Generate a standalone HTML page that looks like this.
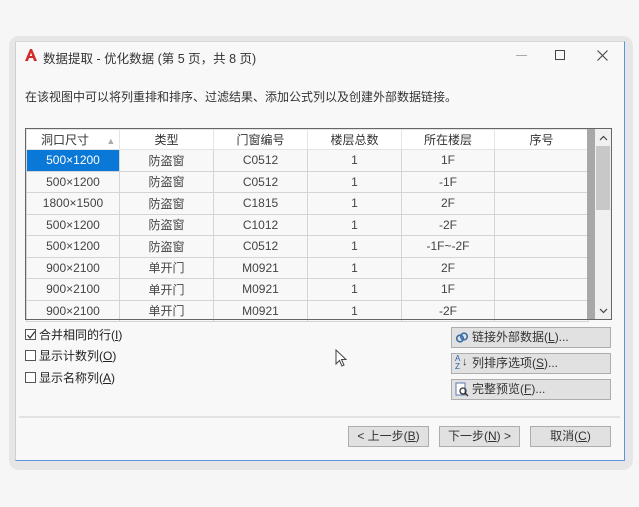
<!DOCTYPE html>
<html><head><meta charset="utf-8"><style>
*{margin:0;padding:0;box-sizing:border-box}
body{width:639px;height:507px;background:#f6f6f6;position:relative;overflow:hidden;font-family:"Liberation Sans","Microsoft YaHei","Noto Sans CJK SC",sans-serif;font-size:12px;color:#222}
.a{position:absolute}
.shadow{left:9px;top:36px;width:624px;height:434px;background:#e6e6e6;border-radius:10px}
.win{left:15px;top:41px;width:610px;height:420px;background:#f8f8f8;border:1px solid #5a94dc;border-top-color:#d8d8d8;border-left-color:#d0d0d0}
table{border-collapse:collapse;position:absolute;left:26px;top:129px;table-layout:fixed}
td,th{height:21.5px;border:1px solid #d4d4d4;text-align:center;font-weight:normal;font-size:12px;color:#444;padding:0;white-space:nowrap}
th{background:#fff;border-color:#e4e4e4;height:20px;color:#333}
td{background:#f8f8f8}
td.sel{background:#0a78d7;color:#fff}
.cb{width:11px;height:11px;border:1px solid #555;background:#fff}
.btn{background:#e1e1e1;border:1px solid #adadad;height:21px;font-size:12px;line-height:19px;color:#333}
</style></head><body>
<div class="a shadow"></div>
<div class="a win"></div>
<svg class="a" style="left:24px;top:48px" width="14" height="14" viewBox="0 0 14 14"><path d="M1 13 L6 1 H8 L13 13 H10 L9 10 H5 L4 13 Z M5.8 8 H8.2 L7 4.5 Z" fill="#d42a2a"/></svg>
<div class="a" style="left:43px;top:48px;font-size:12.5px;color:#333">数据提取 - 优化数据 (第 5 页，共 8 页)</div>
<div class="a" style="left:516px;top:55px;width:11px;height:1px;background:#aaa"></div>
<div class="a" style="left:555px;top:50px;width:10px;height:10px;border:1px solid #444"></div>
<svg class="a" style="left:597px;top:50px" width="11" height="11"><path d="M0.5 0.5 L10.5 10.5 M10.5 0.5 L0.5 10.5" stroke="#444" stroke-width="1.1"/></svg>
<div class="a" style="left:25px;top:88px;color:#333">在该视图中可以将列重排和排序、过滤结果、添加公式列以及创建外部数据链接。</div>
<div class="a" style="left:25px;top:128px;width:587px;height:192px;border:1px solid #666;background:#f8f8f8"></div>
<table>
<colgroup><col style="width:93px"><col style="width:94px"><col style="width:94px"><col style="width:94px"><col style="width:93px"><col style="width:94px"></colgroup>
<tr><th style="text-align:left;padding-left:14px">洞口尺寸 <span style="color:#aaa;font-size:9px;margin-left:14px">▲</span></th><th>类型</th><th>门窗编号</th><th>楼层总数</th><th>所在楼层</th><th>序号</th></tr>
<tr><td class="sel">500×1200</td><td>防盗窗</td><td>C0512</td><td>1</td><td>1F</td><td></td></tr>
<tr><td>500×1200</td><td>防盗窗</td><td>C0512</td><td>1</td><td>-1F</td><td></td></tr>
<tr><td>1800×1500</td><td>防盗窗</td><td>C1815</td><td>1</td><td>2F</td><td></td></tr>
<tr><td>500×1200</td><td>防盗窗</td><td>C1012</td><td>1</td><td>-2F</td><td></td></tr>
<tr><td>500×1200</td><td>防盗窗</td><td>C0512</td><td>1</td><td>-1F~-2F</td><td></td></tr>
<tr><td>900×2100</td><td>单开门</td><td>M0921</td><td>1</td><td>2F</td><td></td></tr>
<tr><td>900×2100</td><td>单开门</td><td>M0921</td><td>1</td><td>1F</td><td></td></tr>
<tr><td>900×2100</td><td>单开门</td><td>M0921</td><td>1</td><td>-2F</td><td></td></tr>
</table>
<div class="a" style="left:26px;top:319px;width:586px;height:1px;background:#666"></div>
<div class="a" style="left:587px;top:129px;width:8px;height:190px;background:#a8a8a8"></div>
<div class="a" style="left:595px;top:129px;width:16px;height:190px;background:#f0f0f0"></div>
<div class="a" style="left:596px;top:146px;width:14px;height:64px;background:#c8c8c8"></div>
<svg class="a" style="left:599px;top:135px" width="9" height="6"><path d="M1 5 L4.5 1.5 L8 5" stroke="#444" fill="none" stroke-width="1.2"/></svg>
<svg class="a" style="left:599px;top:308px" width="9" height="6"><path d="M1 1 L4.5 4.5 L8 1" stroke="#444" fill="none" stroke-width="1.2"/></svg>
<div class="a cb" style="left:25px;top:329px"></div>
<svg class="a" style="left:26px;top:330px" width="10" height="10"><path d="M1.5 5 L4 8 L9 1.5" stroke="#333" stroke-width="1.2" fill="none"/></svg>
<div class="a" style="left:39px;top:326px">合并相同的行(<u>I</u>)</div>
<div class="a cb" style="left:25px;top:350px"></div>
<div class="a" style="left:39px;top:347px">显示计数列(<u>O</u>)</div>
<div class="a cb" style="left:25px;top:372px"></div>
<div class="a" style="left:39px;top:369px">显示名称列(<u>A</u>)</div>
<svg class="a" style="left:335px;top:349px" width="12" height="18"><path d="M1 1 V15 L4.5 11.5 L7 17 L9 16 L6.5 10.5 H11 Z" fill="#fff" stroke="#444" stroke-width="1"/></svg>
<div class="a btn" style="left:451px;top:327px;width:160px;padding-left:20px;text-align:left">链接外部数据(<u>L</u>)...</div>
<svg class="a" style="left:455px;top:331px" width="14" height="13"><circle cx="5" cy="7.5" r="3.3" fill="none" stroke="#3a6ea8" stroke-width="1.6"/><circle cx="9" cy="5.5" r="3.3" fill="none" stroke="#3a6ea8" stroke-width="1.6"/></svg>
<div class="a btn" style="left:451px;top:353px;width:160px;padding-left:20px;text-align:left">列排序选项(<u>S</u>)...</div>
<div class="a" style="left:455px;top:355px;font-size:8px;line-height:8px;color:#2a5ea8">A<br>Z</div><div class="a" style="left:462px;top:356px;font-size:11px;color:#333">↓</div>
<div class="a btn" style="left:451px;top:379px;width:160px;padding-left:20px;text-align:left">完整预览(<u>F</u>)...</div>
<svg class="a" style="left:455px;top:382px" width="14" height="15"><rect x="1" y="1" width="9" height="12" fill="#fff" stroke="#5a7ab0"/><circle cx="8" cy="9" r="3" fill="none" stroke="#333" stroke-width="1.3"/><path d="M10 11 L13 14" stroke="#333" stroke-width="1.5"/></svg>
<div class="a" style="left:19px;top:416px;width:601px;height:2px;background:#e2e2e2"></div>
<div class="a btn" style="left:348px;top:426px;width:81px;text-align:center">&lt; 上一步(<u>B</u>)</div>
<div class="a btn" style="left:439px;top:426px;width:81px;text-align:center">下一步(<u>N</u>) &gt;</div>
<div class="a btn" style="left:530px;top:426px;width:81px;text-align:center">取消(<u>C</u>)</div>
</body></html>
